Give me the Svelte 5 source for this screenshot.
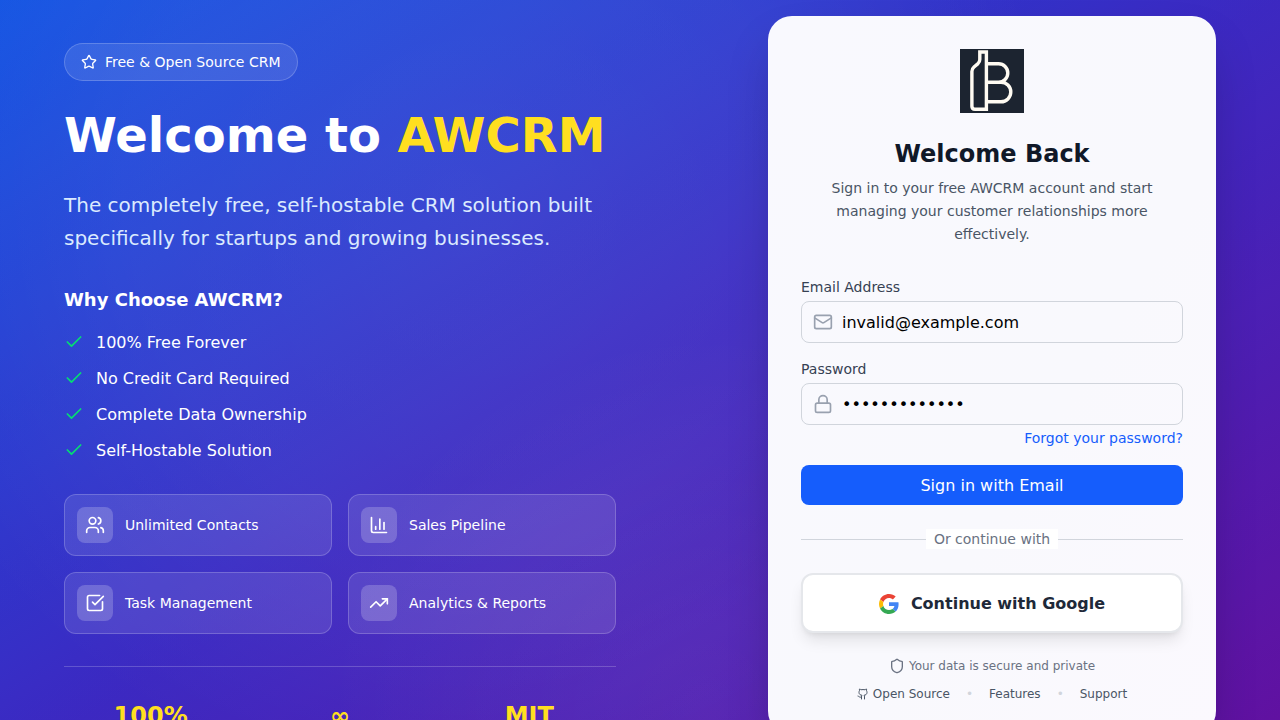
<script lang="ts">
  let email = $state('invalid@example.com');
  let password = $state('placeholder12');

  const reasons = [
    '100% Free Forever',
    'No Credit Card Required',
    'Complete Data Ownership',
    'Self-Hostable Solution',
  ];

  const features = [
    {
      label: 'Unlimited Contacts',
      paths: [
        'M16 21v-2a4 4 0 0 0-4-4H6a4 4 0 0 0-4 4v2',
        'M5 7a4 4 0 1 0 8 0a4 4 0 1 0-8 0',
        'M22 21v-2a4 4 0 0 0-3-3.87',
        'M16 3.13a4 4 0 0 1 0 7.75',
      ],
    },
    {
      label: 'Sales Pipeline',
      paths: ['M3 3v16a2 2 0 0 0 2 2h16', 'M18 17V9', 'M13 17V5', 'M8 17v-3'],
    },
    {
      label: 'Task Management',
      paths: ['M21 10.5V19a2 2 0 0 1-2 2H5a2 2 0 0 1-2-2V5a2 2 0 0 1 2-2h12.5', 'm9 11 3 3L22 4'],
    },
    {
      label: 'Analytics & Reports',
      paths: ['M16 7h6v6', 'm22 7-8.5 8.5-5-5L2 17'],
    },
  ];

  const stats = [
    { value: '100%', label: 'Free' },
    { value: '∞', label: 'Users' },
    { value: 'MIT', label: 'License' },
  ];

  const star = [
    'M11.525 2.295a.53.53 0 0 1 .95 0l2.31 4.679a2.123 2.123 0 0 0 1.595 1.16l5.166.756a.53.53 0 0 1 .294.904l-3.736 3.638a2.123 2.123 0 0 0-.611 1.878l.882 5.14a.53.53 0 0 1-.771.56l-4.618-2.428a2.122 2.122 0 0 0-1.973 0L6.396 21.01a.53.53 0 0 1-.77-.56l.881-5.139a2.122 2.122 0 0 0-.611-1.879L2.16 9.795a.53.53 0 0 1 .294-.906l5.165-.755a2.122 2.122 0 0 0 1.597-1.16z',
  ];
  const check = ['M20 6 9 17l-5-5'];
  const mail = [
    'M4 4h16a2 2 0 0 1 2 2v12a2 2 0 0 1-2 2H4a2 2 0 0 1-2-2V6a2 2 0 0 1 2-2z',
    'm22 7-8.97 5.7a1.94 1.94 0 0 1-2.06 0L2 7',
  ];
  const lock = [
    'M5 11h14a2 2 0 0 1 2 2v7a2 2 0 0 1-2 2H5a2 2 0 0 1-2-2v-7a2 2 0 0 1 2-2z',
    'M7 11V7a5 5 0 0 1 10 0v4',
  ];
  const shield = [
    'M20 13c0 5-3.5 7.5-7.66 8.95a1 1 0 0 1-.67-.01C7.5 20.5 4 18 4 13V6a1 1 0 0 1 1-1c2 0 4.5-1.2 6.24-2.72a1.17 1.17 0 0 1 1.52 0C14.51 3.81 17 5 19 5a1 1 0 0 1 1 1z',
  ];
  const github = [
    'M15 22v-4a4.8 4.8 0 0 0-1-3.5c3 0 6-2 6-5.5.08-1.25-.27-2.48-1-3.5.28-1.15.28-2.35 0-3.5 0 0-1 0-3 1.5-2.64-.5-5.36-.5-8 0C6 2 5 2 5 2c-.3 1.15-.3 2.35 0 3.5A5.403 5.403 0 0 0 4 9c0 3.5 3 5.5 6 5.5-.39.49-.68 1.05-.85 1.65-.17.6-.22 1.23-.15 1.85v4',
    'M9 18c-4.51 2-5-2-7-2',
  ];
</script>

{#snippet icon(paths: string[], size: number)}
  <svg class="icon" width={size} height={size} viewBox="0 0 24 24" aria-hidden="true">
    {#each paths as d}<path {d} />{/each}
  </svg>
{/snippet}

<div class="page">
  <main class="layout">
    <section class="intro">
      <div class="pill">
        {@render icon(star, 16)}
        <span>Free &amp; Open Source CRM</span>
      </div>
      <h1>Welcome to <span class="brand">AWCRM</span></h1>
      <p class="lead">The completely free, self-hostable CRM solution built specifically for startups and growing businesses.</p>

      <h2 class="why">Why Choose AWCRM?</h2>
      <ul class="reasons">
        {#each reasons as reason}
          <li><span class="tick">{@render icon(check, 20)}</span><span>{reason}</span></li>
        {/each}
      </ul>

      <div class="features">
        {#each features as feature}
          <div class="feature">
            <span class="tile">{@render icon(feature.paths, 20)}</span>
            <span>{feature.label}</span>
          </div>
        {/each}
      </div>

      <div class="stats">
        {#each stats as stat}
          <div><div class="value">{stat.value}</div><div class="caption">{stat.label}</div></div>
        {/each}
      </div>
    </section>

    <section class="card">
      <svg class="logo" width="64" height="64" viewBox="0 0 64 64" role="img" aria-label="AWCRM">
        <rect width="64" height="64" fill="#1c2430" />
        <g fill="none" stroke="#fffbf2" stroke-width="3.4">
          <path d="M26.4 3V60.2H15Q11.900 60.2 11.900 57.2V22.500Q11.900 19.800 14 18L18 14.600Q19.800 13 19.800 10.600V3Z" />
          <path d="M26.4 14.800H38.600A9.200 9.200 0 0 1 38.600 33.200H26.4M38.600 33.200H41A9.800 9.800 0 0 1 41 52.800H26.4" />
        </g>
      </svg>
      <h2>Welcome Back</h2>
      <p class="sub">Sign in to your free AWCRM account and start managing your customer relationships more effectively.</p>

      <form onsubmit={(e) => e.preventDefault()}>
        <div class="field">
          <label for="email">Email Address</label>
          <div class="control">
            {@render icon(mail, 20)}
            <input id="email" type="email" bind:value={email} />
          </div>
        </div>
        <div class="field">
          <label for="password">Password</label>
          <div class="control">
            {@render icon(lock, 20)}
            <input id="password" type="password" bind:value={password} />
          </div>
        </div>
        <a class="forgot" href="#forgot">Forgot your password?</a>
        <button class="submit" type="submit">Sign in with Email</button>
      </form>

      <div class="divider"><span>Or continue with</span></div>

      <button class="google" type="button">
        <svg width="20" height="20" viewBox="0 0 48 48" aria-hidden="true">
          <path fill="#ea4335" d="M24 9.500c3.540 0 6.710 1.220 9.210 3.600l6.850-6.850C35.900 2.380 30.470 0 24 0 14.620 0 6.510 5.380 2.560 13.220l7.980 6.190C12.430 13.720 17.740 9.500 24 9.500z" />
          <path fill="#4285f4" d="M46.980 24.550c0-1.570-.15-3.090-.38-4.550H24v9.020h12.940c-.58 2.960-2.260 5.480-4.780 7.180l7.730 6c4.510-4.180 7.090-10.360 7.090-17.650z" />
          <path fill="#fbbc05" d="M10.530 28.590c-.48-1.450-.76-2.990-.76-4.590s.27-3.140.76-4.590l-7.980-6.190C.92 16.460 0 20.120 0 24c0 3.880.92 7.540 2.560 10.780l7.970-6.190z" />
          <path fill="#34a853" d="M24 48c6.480 0 11.930-2.130 15.890-5.810l-7.730-6c-2.150 1.450-4.920 2.300-8.160 2.300-6.260 0-11.570-4.220-13.470-9.910l-7.980 6.190C6.510 42.620 14.620 48 24 48z" />
        </svg>
        <span>Continue with Google</span>
      </button>

      <p class="secure">
        {@render icon(shield, 16)}
        <span>Your data is secure and private</span>
      </p>
      <nav class="links">
        <a href="#source">
          {@render icon(github, 12)}
          <span>Open Source</span>
        </a>
        <span class="dot">•</span>
        <a href="#features">Features</a>
        <span class="dot">•</span>
        <a href="#support">Support</a>
      </nav>
    </section>
  </main>
</div>

<style>
  :global(body) {
    margin: 0;
    font-family: 'DejaVu Sans', sans-serif;
    font-size: 16px;
    line-height: 24px;
  }
  * {
    box-sizing: border-box;
  }
  h1,
  h2,
  p,
  ul {
    margin: 0;
    padding: 0;
  }
  button,
  input {
    font: inherit;
  }
  a {
    color: inherit;
    text-decoration: none;
  }
  .page {
    min-height: 100vh;
    padding: 16px 64px;
    color: #fff;
    background:
      radial-gradient(circle 600px at 36% 26%, rgba(255, 255, 255, 0.07), rgba(255, 255, 255, 0.05) 55%, transparent),
      radial-gradient(circle 380px at 55% 92%, rgba(255, 255, 255, 0.05), transparent),
      linear-gradient(rgba(0, 0, 0, 0.1), rgba(0, 0, 0, 0.1)),
      linear-gradient(to bottom right, #155dfc, #432dd7 50%, #6e11b0);
  }
  .layout {
    display: grid;
    grid-template-columns: 1fr 1fr;
    gap: 48px;
    align-items: start;
    max-width: 1152px;
    margin: 0 auto;
  }
  .icon {
    flex: none;
    fill: none;
    stroke: currentColor;
    stroke-width: 2;
    stroke-linecap: round;
    stroke-linejoin: round;
  }
  .intro {
    padding-top: 27px;
  }
  .pill {
    display: inline-flex;
    align-items: center;
    gap: 8px;
    padding: 8px 16px;
    border: 1px solid rgba(255, 255, 255, 0.2);
    border-radius: 19px;
    background: rgba(255, 255, 255, 0.1);
    font-size: 14px;
    line-height: 20px;
    vertical-align: top;
  }
  h1 {
    margin-top: 24px;
    font-size: 48px;
    line-height: 60px;
    font-weight: 700;
  }
  .brand {
    color: #ffdf20;
  }
  .lead {
    margin-top: 24px;
    color: #dbeafe;
    font-size: 20px;
    line-height: 33px;
  }
  .why {
    margin-top: 31px;
    font-size: 18px;
    line-height: 28px;
    font-weight: 700;
  }
  .reasons {
    display: grid;
    gap: 11px;
    margin-top: 16px;
    list-style: none;
    line-height: 25px;
  }
  .reasons li {
    display: flex;
    align-items: flex-start;
    gap: 12px;
  }
  .tick {
    display: flex;
    padding: 2px 0;
    color: #05df72;
  }
  .features {
    display: grid;
    grid-template-columns: 1fr 1fr;
    gap: 16px;
    margin-top: 31px;
  }
  .feature {
    display: flex;
    align-items: center;
    gap: 12px;
    padding: 12px;
    border: 1px solid rgba(255, 255, 255, 0.2);
    border-radius: 12px;
    background: rgba(255, 255, 255, 0.1);
    font-size: 14px;
    line-height: 20px;
  }
  .tile {
    display: flex;
    padding: 8px;
    border-radius: 8px;
    background: rgba(255, 255, 255, 0.2);
  }
  .stats {
    display: grid;
    grid-template-columns: repeat(3, 1fr);
    gap: 16px;
    margin-top: 32px;
    padding-top: 32px;
    border-top: 1px solid rgba(255, 255, 255, 0.2);
    text-align: center;
  }
  .value {
    color: #ffdf20;
    font-size: 24px;
    line-height: 34px;
    font-weight: 700;
  }
  .caption {
    color: #dbeafe;
    font-size: 14px;
    line-height: 20px;
  }
  .card {
    justify-self: end;
    width: 100%;
    max-width: 448px;
    padding: 32px;
    border: 1px solid rgba(255, 255, 255, 0.2);
    border-radius: 24px;
    background: linear-gradient(to bottom right, #f9f9fe, #f9f9fd 60%, #fbf9fe) border-box;
    box-shadow: 0 25px 50px -12px rgba(0, 0, 0, 0.25);
    color: #4a5565;
  }
  .logo {
    display: block;
    margin: 0 auto 24px;
  }
  .card h2 {
    color: #101828;
    font-size: 24px;
    line-height: 34px;
    font-weight: 700;
    text-align: center;
  }
  .sub {
    margin-top: 6px;
    font-size: 14px;
    line-height: 1.625;
    text-align: center;
  }
  form {
    display: flex;
    flex-direction: column;
    margin-top: 32px;
  }
  .field {
    margin-bottom: 16px;
  }
  .field + .field {
    margin-bottom: 3px;
  }
  .field label {
    display: block;
    margin-bottom: 4px;
    color: #364153;
    font-size: 14px;
    line-height: 20px;
  }
  .control {
    display: flex;
    align-items: center;
    gap: 9px;
    padding-left: 11px;
    border: 1px solid #d1d5dc;
    border-radius: 8px;
    color: #99a1af;
  }
  .control:focus-within {
    border-color: #155dfc;
  }
  .control input {
    flex: 1;
    min-width: 0;
    height: 40px;
    padding: 8px 12px 8px 0;
    border: 0;
    outline: 0;
    background: transparent;
    color: #000;
  }
  .forgot {
    align-self: flex-end;
    margin-bottom: 17px;
    color: #155dfc;
    font-size: 14px;
    line-height: 20px;
  }
  .submit {
    padding: 8px 16px 7px;
    border: 0;
    border-radius: 8px;
    background: #155dfc;
    color: #fff;
    line-height: 25px;
    cursor: pointer;
  }
  .divider {
    display: flex;
    align-items: center;
    margin: 24px 0;
    color: #6a7282;
    font-size: 14px;
    line-height: 20px;
  }
  .divider::before,
  .divider::after {
    flex: 1;
    height: 1px;
    background: #d1d5dc;
    content: '';
  }
  .divider span {
    padding: 0 8px;
    background: #fff;
  }
  .google {
    display: flex;
    align-items: center;
    justify-content: center;
    gap: 12px;
    width: 100%;
    padding: 16px 16px 15px;
    border: 2px solid #e5e7eb;
    border-radius: 12px;
    background: #fff;
    box-shadow:
      0 10px 15px -3px rgba(0, 0, 0, 0.1),
      0 4px 6px -4px rgba(0, 0, 0, 0.1);
    color: #1e2939;
    font-weight: 700;
    line-height: 25px;
    cursor: pointer;
  }
  .secure {
    display: flex;
    align-items: center;
    justify-content: center;
    gap: 4px;
    margin-top: 25px;
    color: #6a7282;
    font-size: 12px;
    line-height: 16px;
  }
  .links {
    display: flex;
    justify-content: center;
    gap: 16px;
    margin-top: 12px;
    font-size: 12px;
    line-height: 16px;
  }
  .links a {
    display: flex;
    align-items: center;
    gap: 4px;
  }
  .dot {
    color: #d1d5dc;
  }
  @media (max-width: 1023px) {
    .page {
      padding: 16px;
    }
    .layout {
      grid-template-columns: 1fr;
    }
    .card {
      justify-self: center;
    }
  }
</style>
